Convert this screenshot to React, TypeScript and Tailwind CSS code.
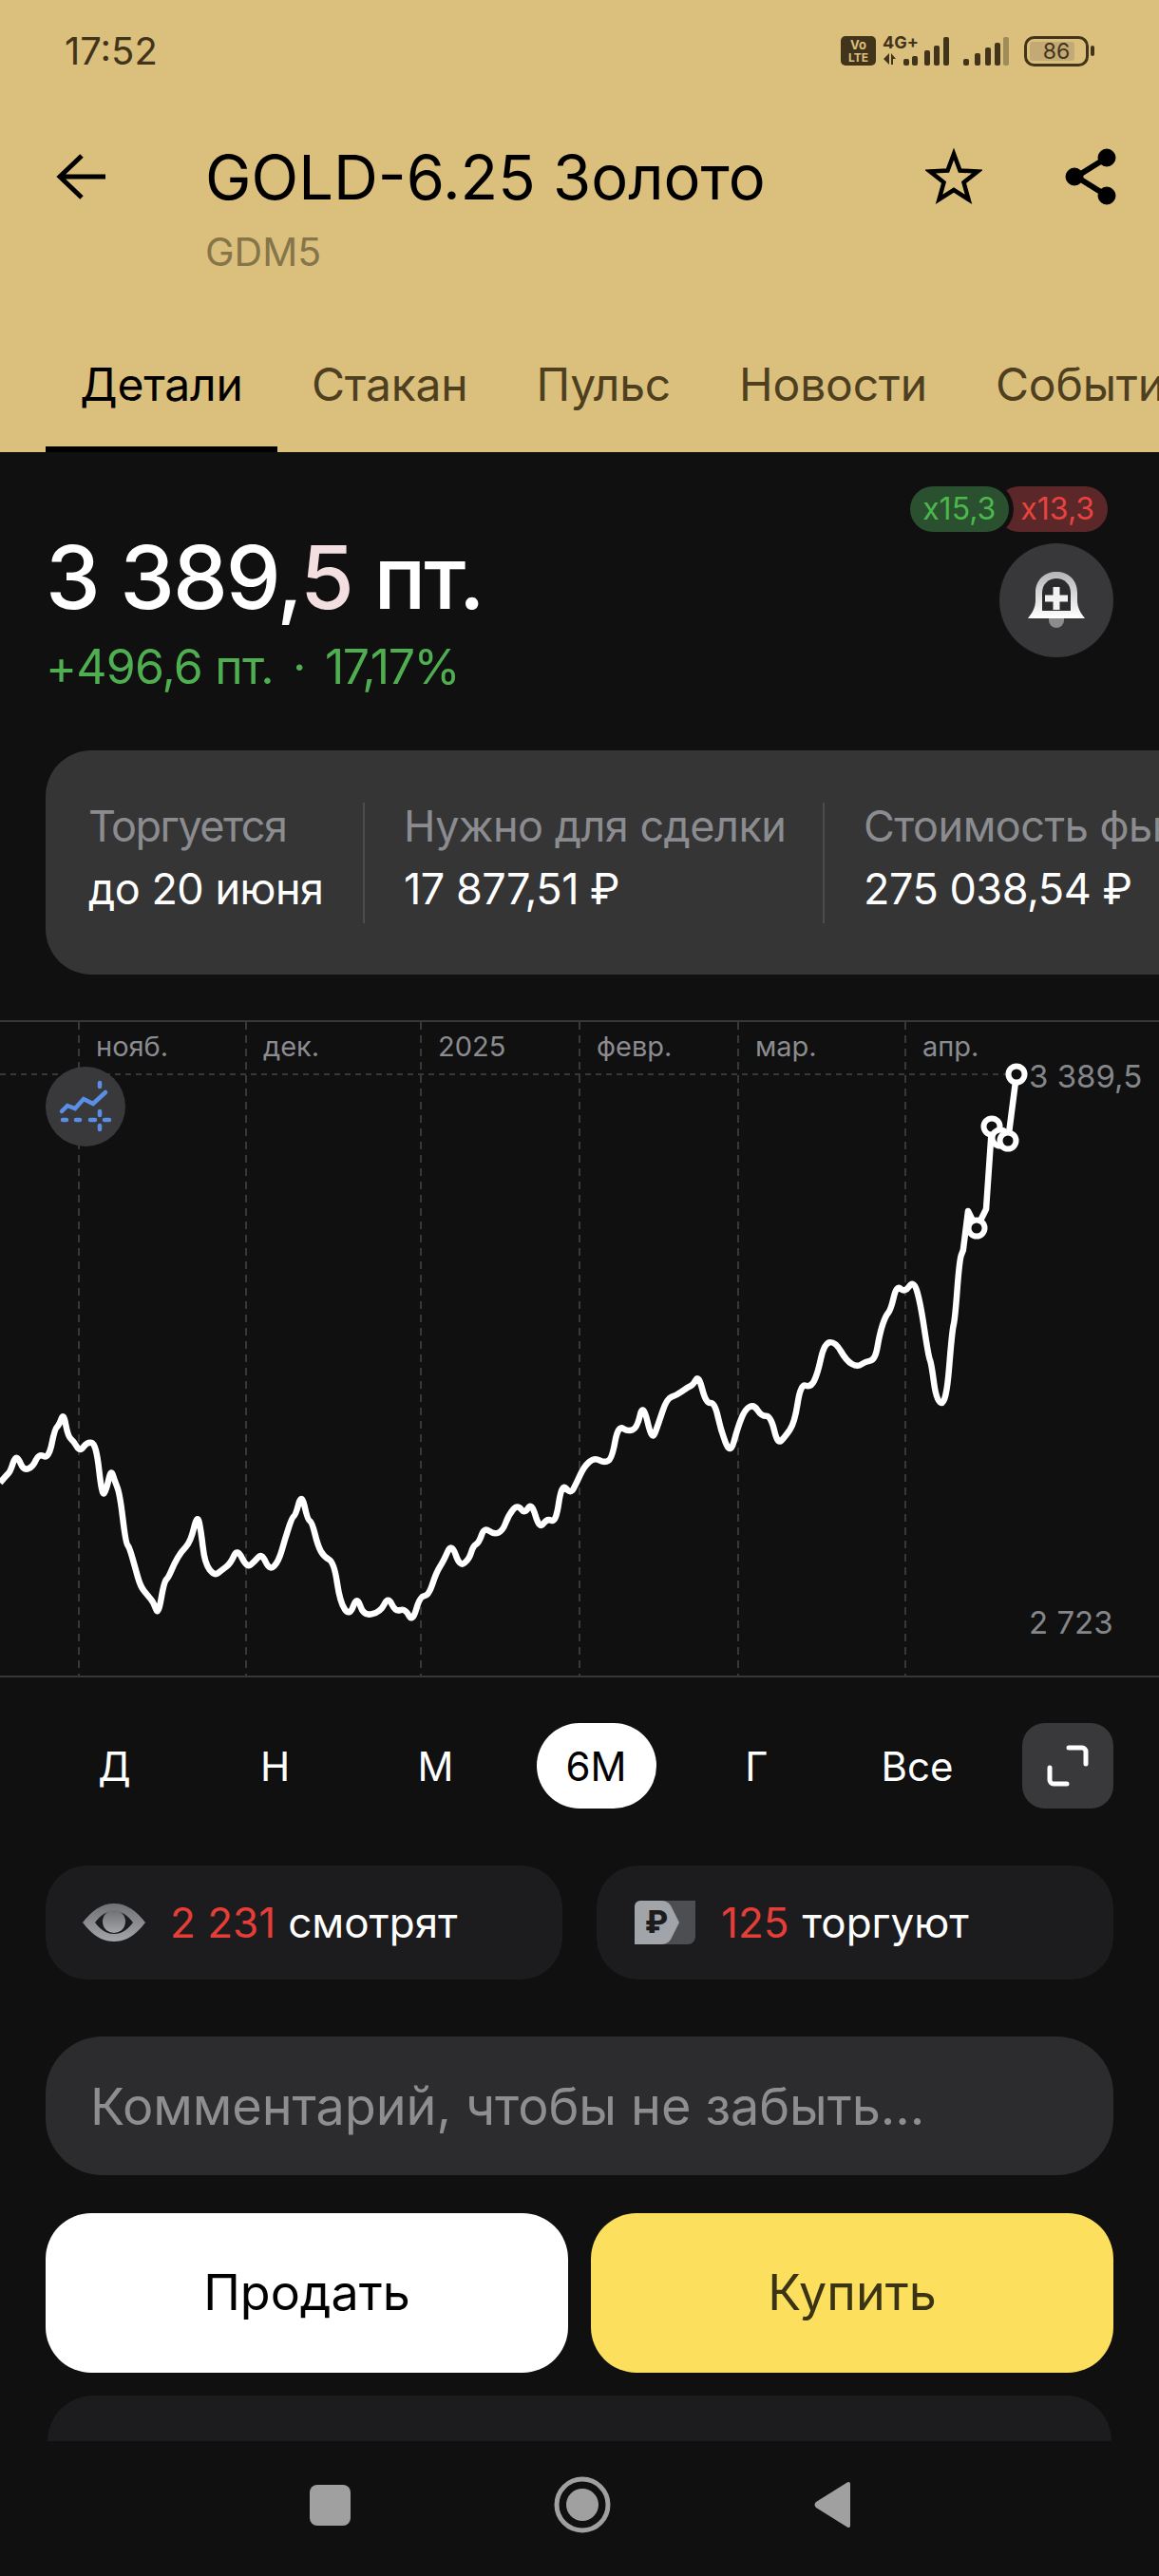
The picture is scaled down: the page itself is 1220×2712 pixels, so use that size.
const zoomPoints = [
  [0,1075],[8,1060],[14,1050],[20,1020],[25,1022],[32,1048],[45,1040],[52,1012],[66,1022],[74,958],[80,950],[86,922],[92,975],[100,985],[108,1008],[118,986],[130,990],[138,1105],[144,1090],[150,1045],[155,1070],[162,1098],[170,1205],[175,1215],[183,1260],[190,1300],[200,1320],[208,1335],[214,1364],[222,1290],[228,1280],[236,1250],[245,1225],[258,1203],[267,1142],[272,1180],[277,1250],[290,1277],[300,1265],[312,1250],[321,1217],[334,1260],[345,1245],[354,1228],[365,1266],[377,1245],[385,1200],[395,1150],[400,1145],[408,1097],[416,1155],[422,1160],[430,1212],[438,1235],[452,1248],[460,1335],[473,1365],[483,1320],[492,1365],[515,1355],[525,1322],[535,1355],[548,1348],[558,1378],[568,1322],[580,1320],[590,1270],[600,1245],[611,1205],[622,1258],[635,1240],[640,1212],[648,1205],[655,1172],[668,1187],[680,1180],[688,1145],[700,1122],[710,1143],[719,1117],[730,1176],[740,1152],[752,1162],[760,1075],[772,1100],[780,1075],[790,1040],[804,1020],[818,1032],[828,1022],[836,950],[850,964],[862,956],[870,900],[882,985],[890,950],[902,892],[915,885],[930,868],[938,862],[945,840],[955,903],[967,900],[975,960],[988,1015],[998,955],[1008,915],[1020,905],[1030,930],[1043,930],[1052,992],[1062,975],[1075,945],[1083,860],[1097,868],[1106,838],[1115,772],[1130,768],[1145,810],[1160,824],[1170,812],[1184,808],[1190,752],[1198,712],[1205,700],[1213,645],[1224,662],[1236,635],[1245,682],[1256,800],[1260,815],[1267,900],[1280,903],[1288,745],[1292,720],[1298,590],[1303,570],
];

const chartEnd = [[1019,1275],[1028,1293],[1038,1273],[1044,1186],[1053,1198],[1061,1201],[1070,1131]];

// rounded through midpoints, the app's line has no sharp corners
const smoothed = zoomPoints.map(([x, y]) => [x / 1.2852, 1040 + y / 2.063]);
const curve = smoothed
  .map(([x, y], i) => {
    if (i === 0) return `M${x.toFixed(1)} ${y.toFixed(1)}`;
    const next = smoothed[i + 1] ?? [x, y];
    const mx = (x + next[0]) / 2;
    const my = (y + next[1]) / 2;
    return `Q${x.toFixed(1)} ${y.toFixed(1)} ${mx.toFixed(1)} ${my.toFixed(1)}`;
  })
  .join(" ");
const linePath = `${curve} ${chartEnd.map(([x, y]) => `L${x} ${y}`).join(" ")}`;

const gridX = [83, 259, 443, 610, 777, 953];
const months = ["нояб.", "дек.", "2025", "февр.", "мар.", "апр."];
const markers = [[1028,1293],[1044,1186],[1053,1198],[1061,1201],[1070,1131]];
const tabs = ["Стакан", "Пульс", "Новости", "События"];
const ranges = ["Д", "Н", "М", "6М", "Г", "Все"];

const StatusIcons = () => (
  <svg width="268" height="44" viewBox="885 32 268 44" fill="#42341a">
    <rect x="885" y="38" width="37" height="31" rx="5" />
    <text x="903.5" y="52" textAnchor="middle" fontSize="13" fontWeight="700" fill="#dbbf7c">Vo</text>
    <text x="903.5" y="65" textAnchor="middle" fontSize="12" fontWeight="700" fill="#dbbf7c">LTE</text>
    <text x="929" y="51" fontSize="18" fontWeight="700">4G+</text>
    <path d="M936 56v12l-6-6zM938 56l5 6h-3v6h-2z" />
    <rect x="951" y="62" width="6" height="7" rx="2" />
    <rect x="960" y="59" width="6" height="10" rx="2" />
    <rect x="973" y="53" width="6" height="16" rx="2" />
    <rect x="983" y="48" width="6" height="21" rx="2" />
    <rect x="993" y="39" width="6" height="30" rx="2" />
    <rect x="1014" y="62" width="6" height="7" rx="2" />
    <rect x="1026" y="56" width="6" height="13" rx="2" />
    <rect x="1037" y="50" width="6" height="19" rx="2" />
    <rect x="1047" y="45" width="6" height="24" rx="2" />
    <rect x="1056" y="39" width="6" height="30" rx="2" fill="#a08c58" />
    <rect x="1079.5" y="39.5" width="65" height="29" rx="9" fill="none" stroke="#42341a" strokeWidth="3" />
    <rect x="1084" y="44" width="47" height="20" rx="3" fill="#c3a973" />
    <rect x="1148" y="48" width="4" height="11" rx="2" />
    <text x="1112" y="62" textAnchor="middle" fontSize="23">86</text>
  </svg>
);

const BackIcon = () => (
  <svg width="52" height="48" viewBox="0 0 52 48" fill="none" stroke="#000" strokeWidth="5">
    <path d="M3 24h49M27 2 4 24l23 22" />
  </svg>
);

const StarIcon = () => (
  <svg width="60" height="60" viewBox="0 0 60 60" fill="none" stroke="#000" strokeWidth="4.5" strokeLinejoin="miter">
    <path d="M30 6 36.500 23.500 55 24.500 40.500 36 45.500 54 30 44 14.500 54 19.500 36 5 24.500 23.500 23.500Z" />
  </svg>
);

const ShareIcon = () => (
  <svg width="56" height="60" viewBox="0 0 56 60" fill="#000" stroke="#000">
    <path d="M44 10 12 30l32 20" fill="none" strokeWidth="6" />
    <circle cx="44" cy="10" r="9" />
    <circle cx="10" cy="30" r="9" />
    <circle cx="44" cy="50" r="9" />
  </svg>
);

const BellIcon = () => (
  <svg width="60" height="60" viewBox="0 0 60 60">
    <defs>
      <linearGradient id="bell" x1="0" y1="0" x2="0" y2="1">
        <stop offset="0" stopColor="#b5b5b6" />
        <stop offset="1" stopColor="#ffffff" />
      </linearGradient>
    </defs>
    <path d="M22 49h16v2a8 8 0 0 1-16 0z" fill="#8c8c8c" />
    <path d="M0 49C4 44 8 38 8 30V22C8 8 18 0 30 0C42 0 52 8 52 22V30C52 38 56 44 60 49Z" fill="url(#bell)" />
    <path d="M15 41V22C15 13 22 7 30 7C38 7 45 13 45 22V41Z" fill="#2b2b2d" />
    <path d="M26.500 16h7v8.500H42v7h-8.500V40h-7v-8.500H18v-7h8.500z" fill="#f2f2f2" />
  </svg>
);

const TrendIcon = () => (
  <svg width="84" height="84" viewBox="0 0 84 84" fill="none" stroke="#5b8ee6" strokeLinecap="round">
    <path d="M17 47 23 41 31 44 40 34 50 39 63 27" strokeWidth="4.500" />
    <path d="M18 56h4M32 56h4M47 56h5M62 56h5M57 17v4M57 47v4M57 62v4" strokeWidth="4.500" />
  </svg>
);

const ExpandIcon = () => (
  <svg width="44" height="44" viewBox="0 0 44 44" fill="none" stroke="#fff" strokeWidth="5" strokeLinecap="round">
    <path d="M23 3h14a4 4 0 0 1 4 4v13M3 24v13a4 4 0 0 0 4 4h14" />
  </svg>
);

const EyeIcon = () => (
  <svg width="66" height="40" viewBox="0 0 66 40">
    <defs>
      <linearGradient id="eye" x1="0" y1="0" x2="0" y2="1">
        <stop offset="0" stopColor="#6f7175" />
        <stop offset="1" stopColor="#a3a5a9" />
      </linearGradient>
    </defs>
    <path d="M0 20C10 7 20 0 33 0C46 0 56 7 66 20C56 33 46 40 33 40C20 40 10 33 0 20Z" fill="url(#eye)" />
    <path d="M13 20C19 12 25 8 33 8C41 8 47 12 53 20C47 28 41 32 33 32C25 32 19 28 13 20Z" fill="#1c1c1e" />
    <circle cx="33" cy="19" r="12" fill="url(#eye)" />
  </svg>
);

const RubleIcon = () => (
  <svg width="64" height="46" viewBox="0 0 64 46">
    <path d="M24 0H64V38a8 8 0 0 1-8 8H24z" fill="#4d4e52" />
    <path d="M0 6a6 6 0 0 1 6-6H28C34 0 37 3 39 7L47 23L39 39C37 43 34 46 28 46H0Z" fill="#a1a4a9" />
    <text x="23" y="34" textAnchor="middle" fontSize="32" fontWeight="800" fill="#1c1c1e">₽</text>
  </svg>
);

const Chart = () => (
  <svg className="block" width="1220" height="692" viewBox="0 1074 1220 692">
    <path d="M0 1075h1220M0 1765h1220" stroke="#38383a" strokeWidth="2" />
    <path d="M0 1131h1070" stroke="#38383a" strokeWidth="2" strokeDasharray="6 5" />
    {gridX.map((x, i) => (
      <g key={x}>
        <path d={`M${x} 1076v688`} stroke="#38383a" strokeWidth="2" strokeDasharray="8 6" />
        <text x={x + 18} y="1112" fontSize="29" fill="#8b8c8f">{months[i]}</text>
      </g>
    ))}
    <path d={linePath} fill="none" stroke="#fff" strokeWidth="6.5" strokeLinejoin="round" />
    {markers.map(([x, y]) => (
      <circle key={x} cx={x} cy={y} r="8.500" fill="#101011" stroke="#fff" strokeWidth="6" />
    ))}
    <text x="1083" y="1145" fontSize="33" fill="#85868a">3 389,5</text>
    <text x="1083" y="1720" fontSize="33" fill="#85868a">2 723</text>
  </svg>
);

export default function App() {
  return (
    <div className="flex h-[2712px] w-[1220px] flex-col overflow-hidden bg-[#101011] font-[Inter,sans-serif] text-white">
      <header className="h-[476px] shrink-0 overflow-hidden bg-[#dbbf7c]">
        <div className="flex h-[108px] items-center justify-between pl-[68px] pr-[67px]">
          <span className="text-[40px] leading-none text-[#42341a]">17:52</span>
          <StatusIcons />
        </div>
        <div className="mt-[42px] flex h-[72px] items-center">
          <div className="ml-[59px] w-[157px]">
            <BackIcon />
          </div>
          <h1 className="text-[65px] leading-none text-black">GOLD-6.25 Золото</h1>
          <div className="ml-auto mr-[43px] flex items-center gap-[87px]">
            <StarIcon />
            <ShareIcon />
          </div>
        </div>
        <div className="mt-[10px] h-[66px] pl-[216px] text-[41px] leading-[66px] text-[#857549]">GDM5</div>
        <nav className="mt-[44px] ml-[48px] flex h-[134px] whitespace-nowrap text-[48px] tracking-[-0.2px]">
          <div className="flex h-full w-[244px] shrink-0 items-center justify-center border-b-[6px] border-black pb-[2px] text-black">Детали</div>
          {tabs.map((tab) => (
            <div key={tab} className="flex h-full shrink-0 items-center px-[36px] pb-[8px] text-[#4d3f20]">
              {tab}
            </div>
          ))}
        </nav>
      </header>

      <section className="flex h-[314px] shrink-0 justify-between pl-[48px] pr-[48px]">
        <div className="pt-[82px]">
          <div className="text-[92px] font-medium leading-[100px] tracking-[-2px]">
            3 389,<span className="text-[#f4dfe0]">5</span> пт.
          </div>
          <div className="mt-[14px] flex text-[50px] leading-[60px] tracking-[-0.8px] text-[#4fae50]">
            <span>+496,6 пт.</span>
            <span className="w-[54px] text-center">·</span>
            <span className="tracking-[-1.5px]">17,17%</span>
          </div>
        </div>
        <div className="flex flex-col items-end pt-[36px]">
          <div className="mr-[6px] flex text-[32px] leading-[48px]">
            <span className="z-10 h-[48px] rounded-full bg-[#2a5030] pl-[13px] pr-[14px] text-[#4cb84c] ring-[5px] ring-[#101011]">x15,3</span>
            <span className="-ml-[13px] h-[48px] rounded-full bg-[#5c2728] pl-[25px] pr-[14px] text-[#e8433f]">x13,3</span>
          </div>
          <div className="mt-[12px] flex h-[120px] w-[120px] items-center justify-center rounded-full bg-[#38383a]">
            <BellIcon />
          </div>
        </div>
      </section>

      <section className="ml-[48px] flex h-[236px] w-[1300px] shrink-0 items-center rounded-[48px] bg-[#353536] whitespace-nowrap text-[45px] tracking-[-0.5px]">
        <div className="h-[127px] w-[336px] shrink-0 border-r-2 border-[#4d4d4f] pl-[45px]">
          <div className="leading-[50px] tracking-[-1.5px] text-[#8b8c90]">Торгуется</div>
          <div className="mt-[10px] leading-[62px]">до 20 июня</div>
        </div>
        <div className="h-[127px] w-[484px] shrink-0 border-r-2 border-[#4d4d4f] pl-[41px]">
          <div className="leading-[50px] text-[#8b8c90]">Нужно для сделки</div>
          <div className="mt-[10px] leading-[62px]">17 877,51 ₽</div>
        </div>
        <div className="h-[127px] shrink-0 pl-[41px]">
          <div className="leading-[50px] text-[#8b8c90]">Стоимость фьючерса</div>
          <div className="mt-[10px] leading-[62px]">275 038,54 ₽</div>
        </div>
      </section>

      <section className="relative mt-[48px] h-[692px] shrink-0">
        <Chart />
        <div className="absolute left-[48px] top-[49px] h-[84px] w-[84px] rounded-full bg-[#39393b]">
          <TrendIcon />
        </div>
      </section>

      <section className="mt-[48px] flex h-[90px] shrink-0 pl-[36px]">
        <div className="grid w-[1014px] grid-cols-6 text-[42px]">
          {ranges.map((range) => (
            <div key={range} className="flex items-center justify-center">
              {range === "6М" ? (
                <span className="flex h-[90px] w-[126px] items-center justify-center rounded-full bg-white text-black">{range}</span>
              ) : (
                range
              )}
            </div>
          ))}
        </div>
        <div className="ml-[26px] flex h-[90px] w-[96px] items-center justify-center rounded-[24px] bg-[#39393b]">
          <ExpandIcon />
        </div>
      </section>

      <section className="mt-[60px] grid h-[120px] shrink-0 grid-cols-2 gap-[36px] px-[48px] text-[44px]">
        <div className="flex items-center rounded-[44px] bg-[#1c1c1e] pl-[39px]">
          <EyeIcon />
          <span className="ml-[26px] text-[#e53e38]">2 231</span>
          <span className="ml-[13px]">смотрят</span>
        </div>
        <div className="flex items-center rounded-[44px] bg-[#1c1c1e] pl-[40px]">
          <RubleIcon />
          <span className="ml-[27px] text-[#e53e38]">125</span>
          <span className="ml-[14px]">торгуют</span>
        </div>
      </section>

      <section className="mx-[48px] mt-[60px] flex h-[146px] shrink-0 items-center rounded-[60px] bg-[#2c2c2e] pl-[47px] text-[54px] tracking-[-0.1px] text-[#8e8e90]">
        Комментарий, чтобы не забыть...
      </section>

      <section className="mt-[40px] grid h-[168px] shrink-0 grid-cols-2 gap-[24px] px-[48px] text-[52px]">
        <div className="flex items-center justify-center rounded-[48px] bg-white text-black">Продать</div>
        <div className="flex items-center justify-center rounded-[48px] bg-[#fcdf5c] text-[#3a3314]">Купить</div>
      </section>

      <div className="mx-[50px] mt-[24px] h-[48px] shrink-0 rounded-t-[48px] bg-[#1c1c1e]" />

      <nav className="flex flex-1 items-center justify-center gap-[214px] pb-[8px]">
        <div className="h-[43px] w-[43px] rounded-[8px] bg-[#a0a0a0]" />
        <svg width="60" height="60" viewBox="0 0 60 60">
          <circle cx="30" cy="30" r="27" fill="none" stroke="#a0a0a0" strokeWidth="5" />
          <circle cx="30" cy="30" r="17" fill="#a0a0a0" />
        </svg>
        <svg width="38" height="50" viewBox="0 0 38 50">
          <path d="M38 3V47C38 49 36 50 34 48L2 28C0 26 0 24 2 22L34 2C36 0 38 1 38 3Z" fill="#a0a0a0" />
        </svg>
      </nav>
    </div>
  );
}
